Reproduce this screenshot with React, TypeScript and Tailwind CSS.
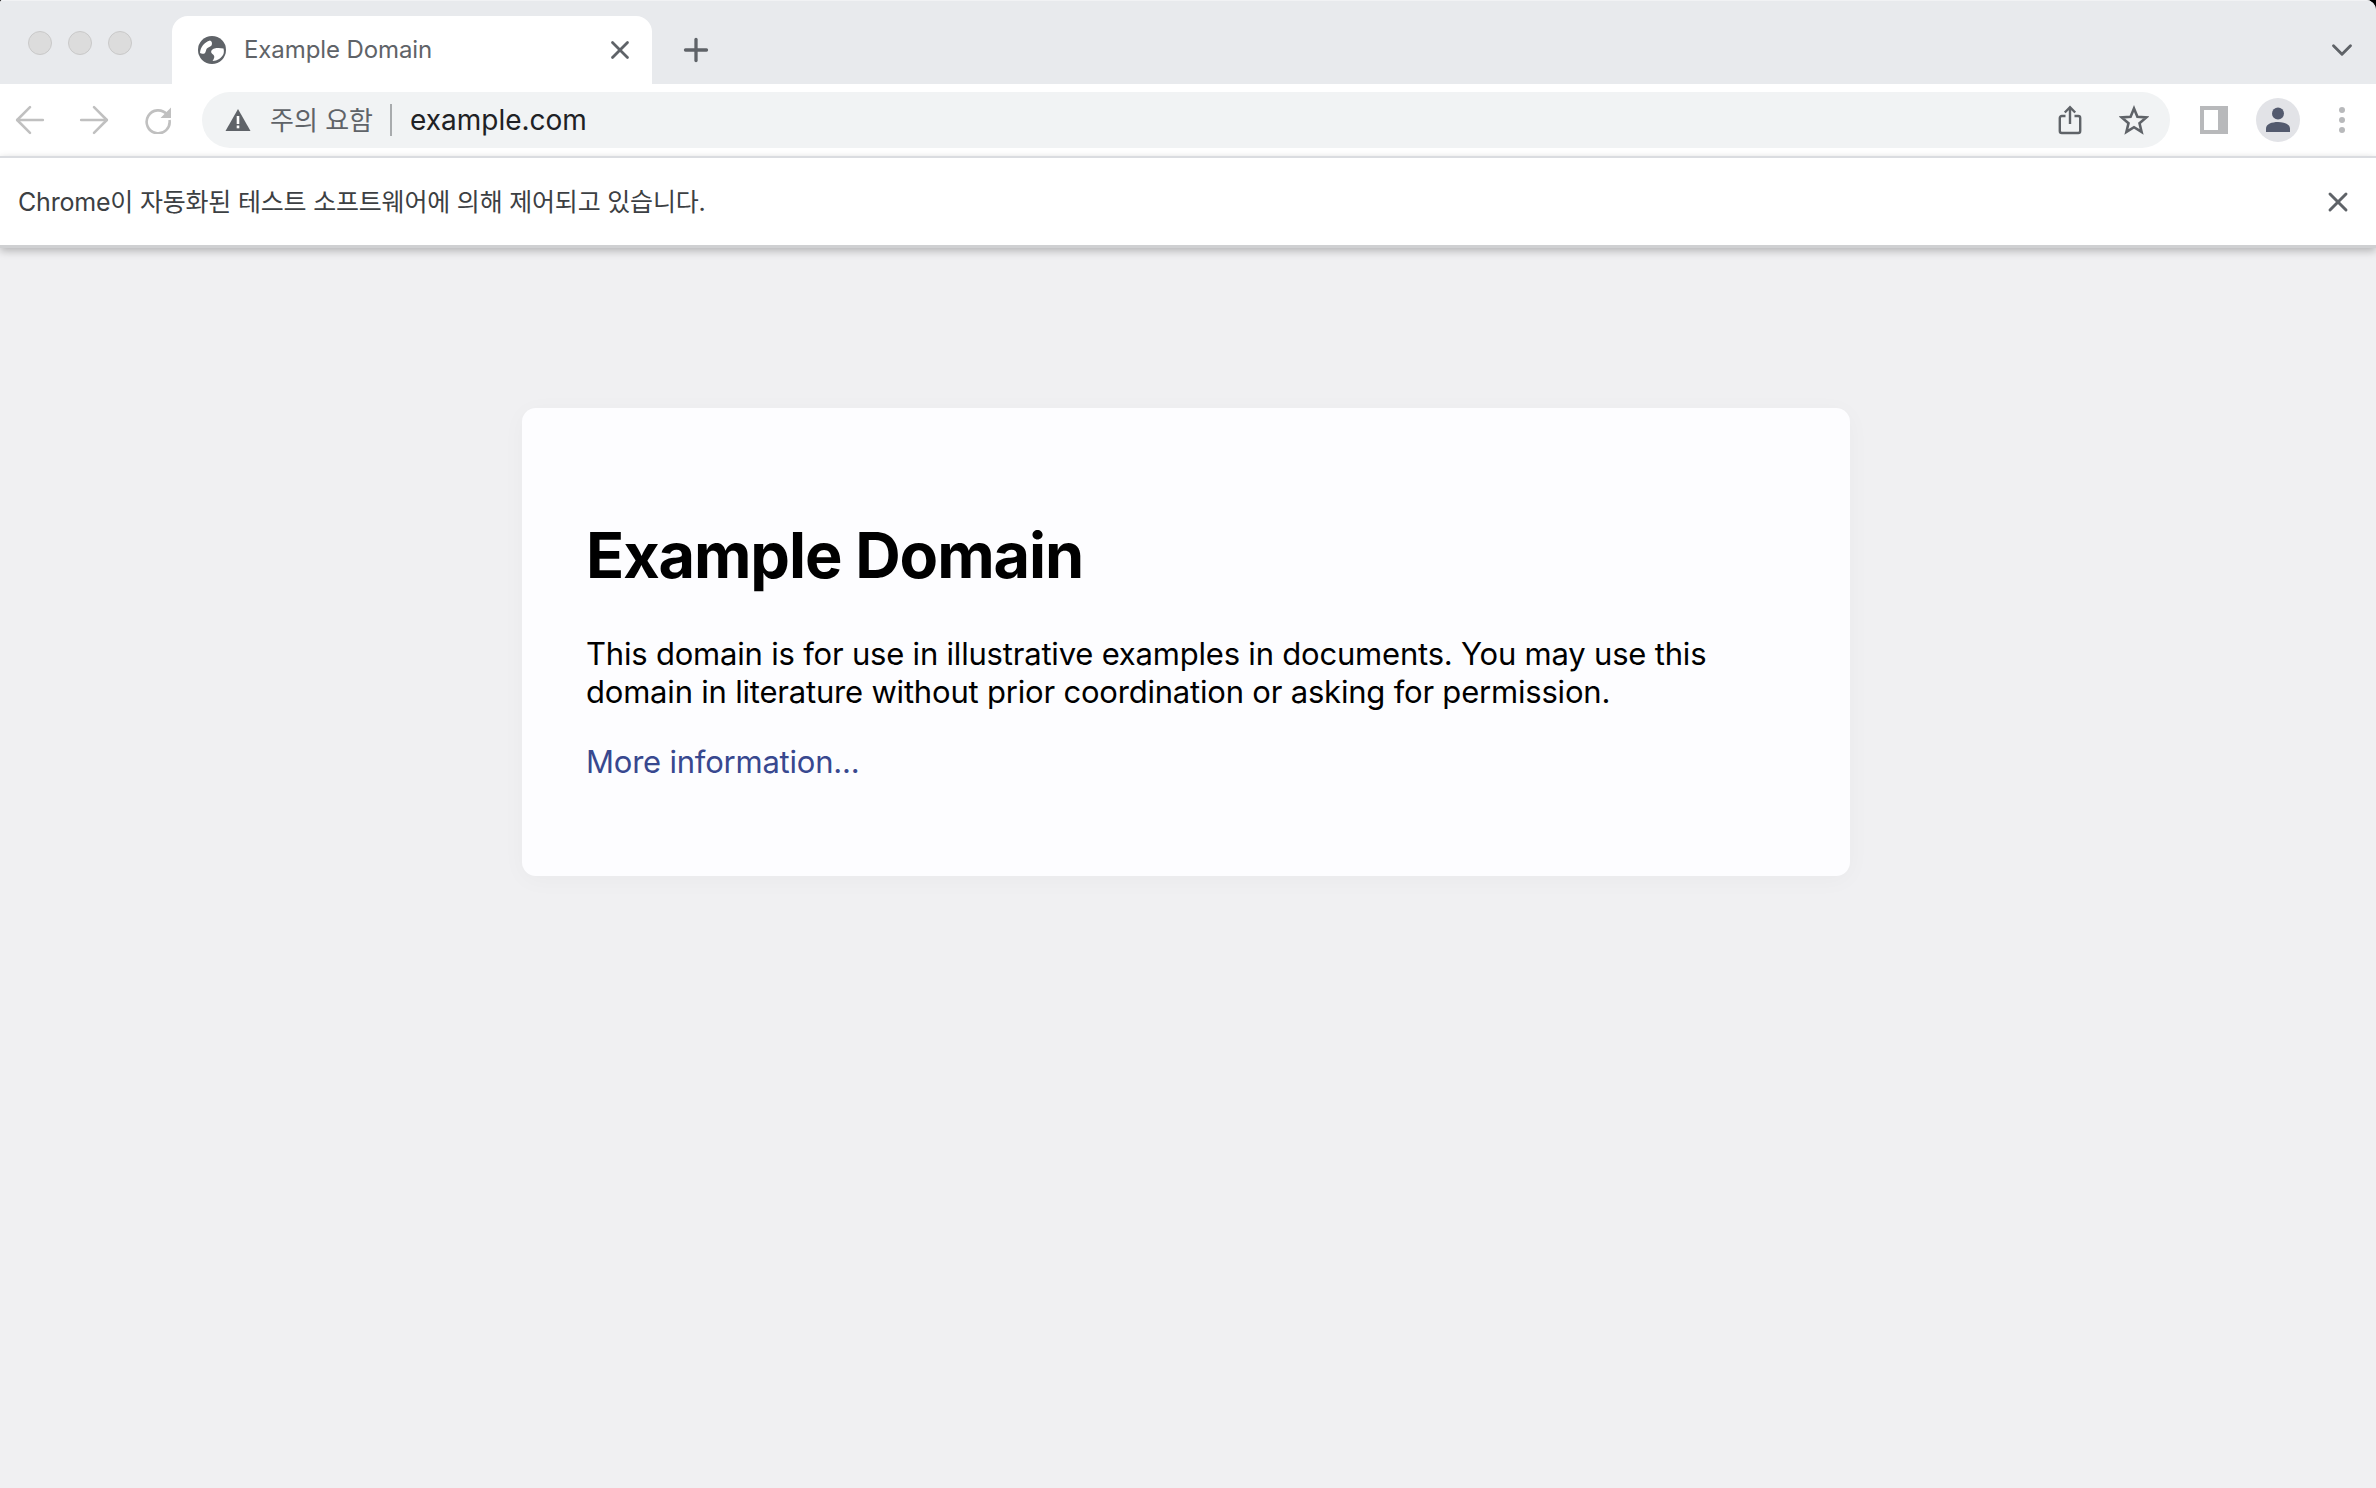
import React from "react";
import { X, Plus, ChevronDown, ArrowLeft, ArrowRight } from "lucide-react";

const Favicon = () => (
  <svg width="28" height="28" viewBox="0 0 28 28" className="shrink-0">
    <circle cx="14" cy="14" r="14" fill="#5f6368" />
    <path
      fill="#fff"
      d="M2 17C2.500 11 6 6.500 12 4.500c2 .5 2.500 3 1.500 5-1.500 2-4 1.500-5 3.500-.7 1.500-.5 3-2 4.500-1.500.5-3.500 0-4.500-.5zM25.500 12.500c-3-.5-6-.8-9 0-2.500.7-4 2.500-3 4.500 1 1.500 3 2 2.800 4-.2 1.500-.8 2.500-1.800 4 5-.2 9-3 11-7 .5-2 .5-3.500 0-5.500z"
    />
  </svg>
);

const WarningIcon = () => (
  <svg width="26" height="24" viewBox="0 0 26 24" className="shrink-0">
    <path fill="#5f6368" d="M13 1 25.500 23H.5z" />
    <rect x="11.700" y="8" width="2.600" height="8" fill="#fff" />
    <rect x="11.700" y="17.500" width="2.600" height="2.800" fill="#fff" />
  </svg>
);

const ReloadIcon = () => (
  <svg width="28" height="28" viewBox="0 0 28 28" fill="none" className="shrink-0">
    <path d="M23 8.500A11.500 11.500 0 1 0 25.500 14" stroke="#c0c0c0" strokeWidth="2.600" />
    <path d="M27 1.500V12H16.500z" fill="#c0c0c0" />
  </svg>
);

const ShareIcon = () => (
  <svg width="24" height="30" viewBox="0 0 24 30" fill="none" stroke="#5f6368" strokeWidth="2.400" className="shrink-0">
    <path d="M7.500 11H3.800a2 2 0 0 0-2 2v13a2 2 0 0 0 2 2h16.400a2 2 0 0 0 2-2V13a2 2 0 0 0-2-2h-3.700" strokeLinejoin="round" />
    <path d="M12 19V2.500M6.800 7.500 12 2.200l5.200 5.300" />
  </svg>
);

const StarIcon = () => (
  <svg width="30" height="30" viewBox="0 0 30 30" fill="none" stroke="#5f6368" strokeWidth="2.600" strokeLinejoin="miter" className="shrink-0">
    <path d="m15 3.500 3.400 8.200 8.900.7-6.800 5.800 2.100 8.700L15 22.200l-7.600 4.700 2.100-8.700-6.800-5.800 8.900-.7z" />
  </svg>
);

const AvatarIcon = () => (
  <svg width="26" height="26" viewBox="0 0 26 26" className="shrink-0">
    <circle cx="13" cy="6.500" r="6" fill="#535a6e" />
    <path fill="#535a6e" d="M1 25v-3.500C1 17 7 15 13 15s12 2 12 6.500V25z" />
  </svg>
);

export default function App() {
  return (
    <div className="flex h-[1488px] w-[2376px] flex-col overflow-hidden bg-black font-['Inter','Noto_Sans_CJK_KR',sans-serif]">
      <div className="flex h-full flex-col overflow-hidden rounded-tl-[3px] rounded-tr-[10px] bg-[#f0f0f2]">
        {/* tab strip */}
        <div className="flex h-[84px] shrink-0 items-end border-t border-[#f1f2f4] bg-[#e8eaed] pr-[17px]">
          <div className="flex h-[68px] items-start gap-[16px] pl-[28px] pt-[15px]">
            <span className="size-[24px] rounded-full border border-[#c9c9c9] bg-[#dcdcdc]" />
            <span className="size-[24px] rounded-full border border-[#c9c9c9] bg-[#dcdcdc]" />
            <span className="size-[24px] rounded-full border border-[#c9c9c9] bg-[#dcdcdc]" />
          </div>
          <div className="ml-[40px] flex h-[68px] w-[480px] items-center rounded-t-[16px] bg-white pl-[26px] pr-[17px]">
            <Favicon />
            <span className="ml-[18px] flex-1 text-[24px] tracking-[-0.1px] text-[#5f6368]">Example Domain</span>
            <X size={30} strokeWidth={2.200} color="#5f6368" />
          </div>
          <div className="flex h-[68px] items-center pl-[26px]">
            <Plus size={36} strokeWidth={2.200} color="#5f6368" />
          </div>
          <div className="ml-auto flex h-[68px] items-center">
            <ChevronDown size={34} strokeWidth={2} color="#5f6368" />
          </div>
        </div>

        {/* toolbar */}
        <div className="flex h-[72px] shrink-0 items-center bg-white pl-[8px]">
          <ArrowLeft size={44} strokeWidth={1.400} color="#c0c0c0" />
          <ArrowRight size={44} strokeWidth={1.400} color="#c0c0c0" className="ml-[20px]" />
          <span className="ml-[28px]">
            <ReloadIcon />
          </span>
          <div className="ml-[30px] flex h-[56px] w-[1968px] items-center rounded-full bg-[#f1f3f4] pl-[23px] pr-[21px]">
            <WarningIcon />
            <span className="ml-[19px] text-[26px] text-[#5f6368]">주의 요함</span>
            <span className="ml-[17px] h-[32px] w-[2px] bg-[#a8abad]" />
            <span className="ml-[18px] flex-1 text-[28px] text-[#202124]">example.com</span>
            <ShareIcon />
            <span className="ml-[37px]">
              <StarIcon />
            </span>
          </div>
          <div className="ml-[30px] h-[28px] w-[28px] border-[4px] border-r-[10px] border-[#b8b9bb] bg-white" />
          <div className="ml-[28px] flex size-[44px] items-center justify-center rounded-full bg-[#e2e3e7]">
            <AvatarIcon />
          </div>
          <div className="ml-[39px] flex flex-col gap-[4px]">
            <span className="size-[6px] rounded-full bg-[#b8b9bb]" />
            <span className="size-[6px] rounded-full bg-[#b8b9bb]" />
            <span className="size-[6px] rounded-full bg-[#b8b9bb]" />
          </div>
        </div>

        {/* automation infobar */}
        <div className="flex h-[92px] shrink-0 items-center border-t-2 border-b-[3px] border-t-[#dadce0] border-b-[#cfd0d2] bg-white pl-[18px] pr-[22px] shadow-[0_3px_8px_rgba(0,0,0,0.25)]">
          <span className="flex-1 pt-[2px] text-[25px] tracking-[-0.2px] text-[#3c4043]">Chrome이 자동화된 테스트 소프트웨어에 의해 제어되고 있습니다.</span>
          <X size={32} strokeWidth={2.200} color="#5f6368" />
        </div>

        {/* page */}
        <div className="flex flex-1 justify-center pt-[160px]">
          <div className="ml-[-4px] h-[468px] w-[1328px] rounded-[14px] bg-[#fdfdff] px-[64px] pt-[110px] shadow-[0_4px_24px_rgba(0,0,0,0.03)]">
            <h1 className="text-[63px] leading-[74px] font-bold tracking-[-1.1px] text-black">Example Domain</h1>
            <p className="mt-[43px] text-[31px] leading-[38px] tracking-[-0.2px] text-black">
              This domain is for use in illustrative examples in documents. You may use this domain in literature without prior coordination or asking for permission.
            </p>
            <p className="mt-[32px] text-[31px] leading-[38px] tracking-[-0.22px]">
              <a href="#" className="text-[#38488f]">
                More information...
              </a>
            </p>
          </div>
        </div>
      </div>
    </div>
  );
}
